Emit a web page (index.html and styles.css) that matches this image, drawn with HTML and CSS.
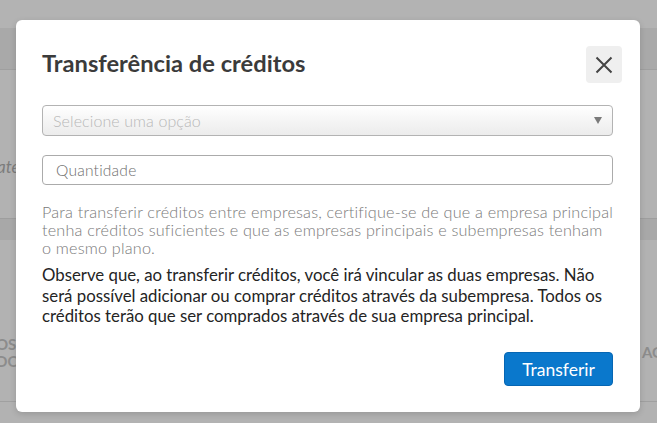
FILE: index.html
```html
<!DOCTYPE html>
<html lang="pt">
<head>
<meta charset="utf-8">
<title>Transferência de créditos</title>
<link rel="stylesheet" href="styles.css">
</head>
<body>
<div class="page">
  <div class="topbar"></div>
  <div class="header"></div>
  <div class="section">
    <span class="italic">ate</span>
  </div>
  <div class="band"></div>
  <div class="section2">
    <span class="cols-left">OS<br>DO</span>
    <span class="cols-right">AG</span>
  </div>
  <div class="rest"></div>
</div>

<div class="modal">
  <div class="modal-head">
    <h1 class="title">Transferência de créditos</h1>
    <button class="close" aria-label="Fechar">
      <svg width="18" height="18" viewBox="0 0 18 18"><path d="M1.5 1.5 L16.5 16.5 M16.5 1.5 L1.5 16.5" stroke="#444" stroke-width="2" fill="none"/></svg>
    </button>
  </div>
  <div class="select">
    <span class="placeholder">Selecione uma opção</span>
    <span class="arrow"></span>
  </div>
  <div class="input"><span class="input-ph">Quantidade</span></div>
  <p class="note">Para transferir créditos entre empresas, certifique-se de que a empresa principal tenha créditos suficientes e que as empresas principais e subempresas tenham<br>o mesmo plano.</p>
  <p class="warn">Observe que, ao transferir créditos, você irá vincular as duas empresas. Não será possível adicionar ou comprar créditos através da subempresa. Todos os créditos terão que ser comprados através de sua empresa principal.</p>
  <div class="actions">
    <button class="primary">Transferir</button>
  </div>
</div>
</body>
</html>
```

FILE: styles.css
```css
* { box-sizing: border-box; }
html, body { margin: 0; padding: 0; }
body {
  width: 657px;
  height: 423px;
  overflow: hidden;
  background: #b2b2b2;
  font-family: Lato, "Open Sans", sans-serif;
}
.page { display: flex; flex-direction: column; height: 423px; }
.topbar { height: 28px; background: #b3b3b3; }
.header { height: 42px; background: #a9a9a9; border-bottom: 1px solid #9f9f9f; }
.section { height: 149px; border-bottom: 1px solid #9e9e9e; display: flex; align-items: center; padding-top: 44px; }
.italic { font-style: italic; color: #7c7c7c; font-size: 17px; margin-left: -3px; }
.band { height: 21px; background: #a8a8a8; }
.section2 { height: 162px; border-bottom: 1px solid #a0a0a0; position: relative; display: flex; justify-content: space-between; align-items: flex-end; padding-bottom: 31px; }
.cols-left { font-weight: bold; color: #8c8c8c; font-size: 15px; line-height: 17px; margin-left: -4px; }
.cols-right { font-weight: bold; color: #8c8c8c; font-size: 15px; line-height: 17px; margin-right: -6px; margin-bottom: 9px; }
.rest { flex: 1; }

.modal {
  position: absolute;
  left: 16px;
  top: 20px;
  width: 624px;
  height: 392px;
  background: #fff;
  border-radius: 6px;
  box-shadow: 0 2px 6px rgba(0,0,0,0.15);
  padding: 26px 27px 26px 26px;
  display: flex;
  flex-direction: column;
}
.modal-head { display: flex; align-items: center; justify-content: space-between; height: 37px; }
.title { margin: 0; font-size: 23.7px; font-weight: 700; color: #3b3b3b; line-height: 28px; position: relative; top: -2px; }
.close {
  width: 36px; height: 37px; margin-right: -9px;
  border: none; border-radius: 4px; background: #efefef;
  display: flex; align-items: center; justify-content: center; padding: 0;
}
.select {
  margin-top: 22px;
  height: 31px;
  border: 1px solid #b3b3b3;
  border-radius: 4px;
  background: linear-gradient(#ffffff, #f4f4f4 55%, #ececec);
  display: flex; align-items: center; justify-content: space-between;
  padding: 0 10px 0 10px;
}
.placeholder { color: #b8b8b8; font-size: 16px; font-weight: 300; letter-spacing: 0.1px; }
.arrow { width: 0; height: 0; border-left: 4px solid transparent; border-right: 4px solid transparent; border-top: 7px solid #7a7a7a; }
.input {
  margin-top: 19px;
  height: 30px;
  border: 1px solid #ababab;
  border-radius: 4px;
  display: flex; align-items: center;
  padding-left: 13px;
}
.input-ph { color: #6e6e6e; font-size: 15.6px; font-weight: 300; letter-spacing: 0.2px; }
.note { margin: 18px 0 0; font-size: 16.2px; line-height: 18px; color: #7a7a7a; font-weight: 300; letter-spacing: 0.2px; }
.warn { margin: 8px 0 0; font-size: 16.8px; line-height: 20.5px; color: #242424; }
.actions { margin-top: auto; display: flex; justify-content: flex-end; }
.primary {
  width: 109px; height: 34px;
  background: #0a78cc; color: #fff;
  border: 1px solid #0666b3; border-radius: 4px;
  font-family: Lato, sans-serif; font-size: 17.5px;
  padding: 0;
}
```
